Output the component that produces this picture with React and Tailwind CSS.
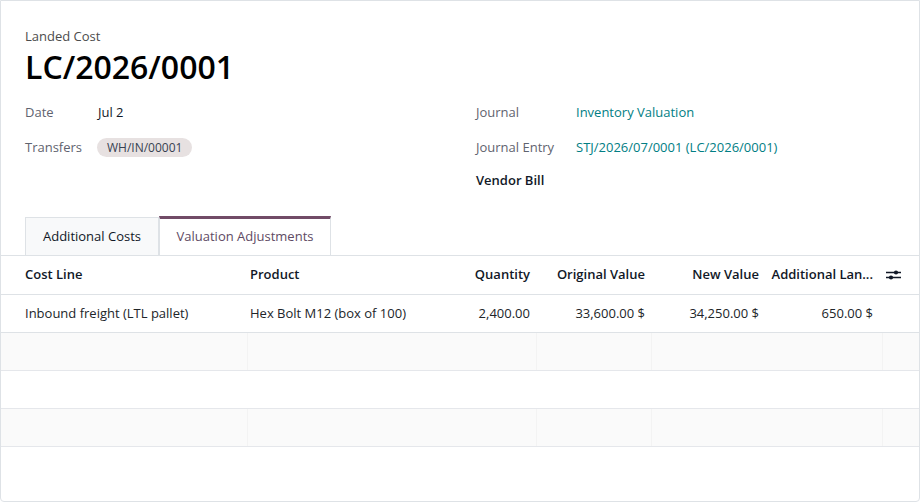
import React from 'react';

const font = { fontFamily: '"Open Sans", "Noto Sans", sans-serif' };

const rows = [
  {
    line: 'Inbound freight (LTL pallet)',
    product: 'Hex Bolt M12 (box of 100)',
    qty: '2,400.00',
    orig: '33,600.00 $',
    next: '34,250.00 $',
    add: '650.00 $',
  },
];

const AdjustIcon = () => (
  <svg width="15" height="12" viewBox="0 0 15 12" fill="none">
    <line x1="0" y1="3.5" x2="15" y2="3.5" stroke="#111827" strokeWidth="1.3" />
    <circle cx="10" cy="3.5" r="2.1" fill="#111827" />
    <line x1="0" y1="8.5" x2="15" y2="8.5" stroke="#111827" strokeWidth="1.3" />
    <circle cx="5" cy="8.5" r="2.1" fill="#111827" />
  </svg>
);

const Field = ({ label, children, bold, h = 'h-[35px]' }) => (
  <div className={`flex items-center ${h}`}>
    <div className={`w-[100px] shrink-0 ${bold ? 'font-semibold text-[#111827]' : 'text-[#5f636f]'}`}>{label}</div>
    <div>{children}</div>
  </div>
);

export default function App() {
  return (
    <div className="w-[920px] h-[502px] bg-white text-[13px] text-[#212529]" style={font}>
      <div className="h-full border border-[#dee2e6] rounded-b-[4px] flex flex-col overflow-hidden">
        <div className="px-6 pt-[25px]">
          <div className="text-[#4c4c4c] leading-5">Landed Cost</div>
          <h1 className="text-[32px] leading-[44px] font-semibold text-black -mt-[1px]">LC/2026/0001</h1>
          <div className="grid grid-cols-2 gap-x-6 mt-[6px]">
            <div>
              <Field label="Date">
                <span className="text-[#111827] -ml-[27px]">Jul 2</span>
              </Field>
              <Field label="Transfers">
                <span className="-ml-[28px] inline-block rounded-full bg-[#e7e1e1] px-[10px] leading-[19px] text-[12px] text-[#374151]">
                  WH/IN/00001
                </span>
              </Field>
            </div>
            <div className="pl-[4px]">
              <Field label="Journal">
                <span className="text-[#017e84]">Inventory Valuation</span>
              </Field>
              <Field label="Journal Entry">
                <span className="text-[#017e84]">STJ/2026/07/0001 (LC/2026/0001)</span>
              </Field>
              <Field label="Vendor Bill" bold h="h-[31px]" />
            </div>
          </div>
        </div>

        <div className="mt-[20px] px-6 flex border-b border-[#dee2e6]">
          <div className="w-[134px] h-[38px] flex items-center justify-center bg-[#f8f9fa] border border-b-0 border-[#dee2e6] text-[#111827] mt-[1px]">
            Additional Costs
          </div>
          <div className="w-[172px] h-[39px] -mb-px flex items-center justify-center bg-white border-x border-[#dee2e6] border-t-[3px] border-t-[#714b67] text-[#5e4a63]">
            Valuation Adjustments
          </div>
        </div>

        <div className="flex h-[39px] items-center border-b border-[#dee2e6] font-semibold text-[#111827]">
          <div className="w-[249px] pl-6">Cost Line</div>
          <div className="w-[198px]">Product</div>
          <div className="w-[82px] text-right">Quantity</div>
          <div className="w-[115px] text-right">Original Value</div>
          <div className="w-[114px] text-right">New Value</div>
          <div className="w-[114px] text-right truncate pl-2">Additional Lan...</div>
          <div className="pl-[13px] flex items-center">
            <AdjustIcon />
          </div>
        </div>

        {rows.map((r) => (
          <div key={r.line} className="flex h-[38px] items-center border-b border-[#dee2e6] text-[#212529]">
            <div className="w-[249px] pl-6">{r.line}</div>
            <div className="w-[198px]">{r.product}</div>
            <div className="w-[82px] text-right">{r.qty}</div>
            <div className="w-[115px] text-right">{r.orig}</div>
            <div className="w-[114px] text-right">{r.next}</div>
            <div className="w-[114px] text-right">{r.add}</div>
            <div className="flex-1" />
          </div>
        ))}

        {[0, 1, 2].map((i) => (
          <div
            key={i}
            className={`flex h-[38px] border-b border-[#e5e7eb] ${i % 2 === 0 ? 'bg-[#fafafa]' : 'bg-white'}`}
          >
            <div className={`w-[247px] border-r ${i % 2 === 0 ? 'border-[#f3f3f3]' : 'border-white'}`} />
            <div className={`w-[289px] border-r ${i % 2 === 0 ? 'border-[#f3f3f3]' : 'border-white'}`} />
            <div className={`w-[115px] border-r ${i % 2 === 0 ? 'border-[#f3f3f3]' : 'border-white'}`} />
            <div className={`w-[231px] border-r ${i % 2 === 0 ? 'border-[#f3f3f3]' : 'border-white'}`} />
            <div className="flex-1" />
          </div>
        ))}
        <div className="flex-1" />
      </div>
    </div>
  );
}
